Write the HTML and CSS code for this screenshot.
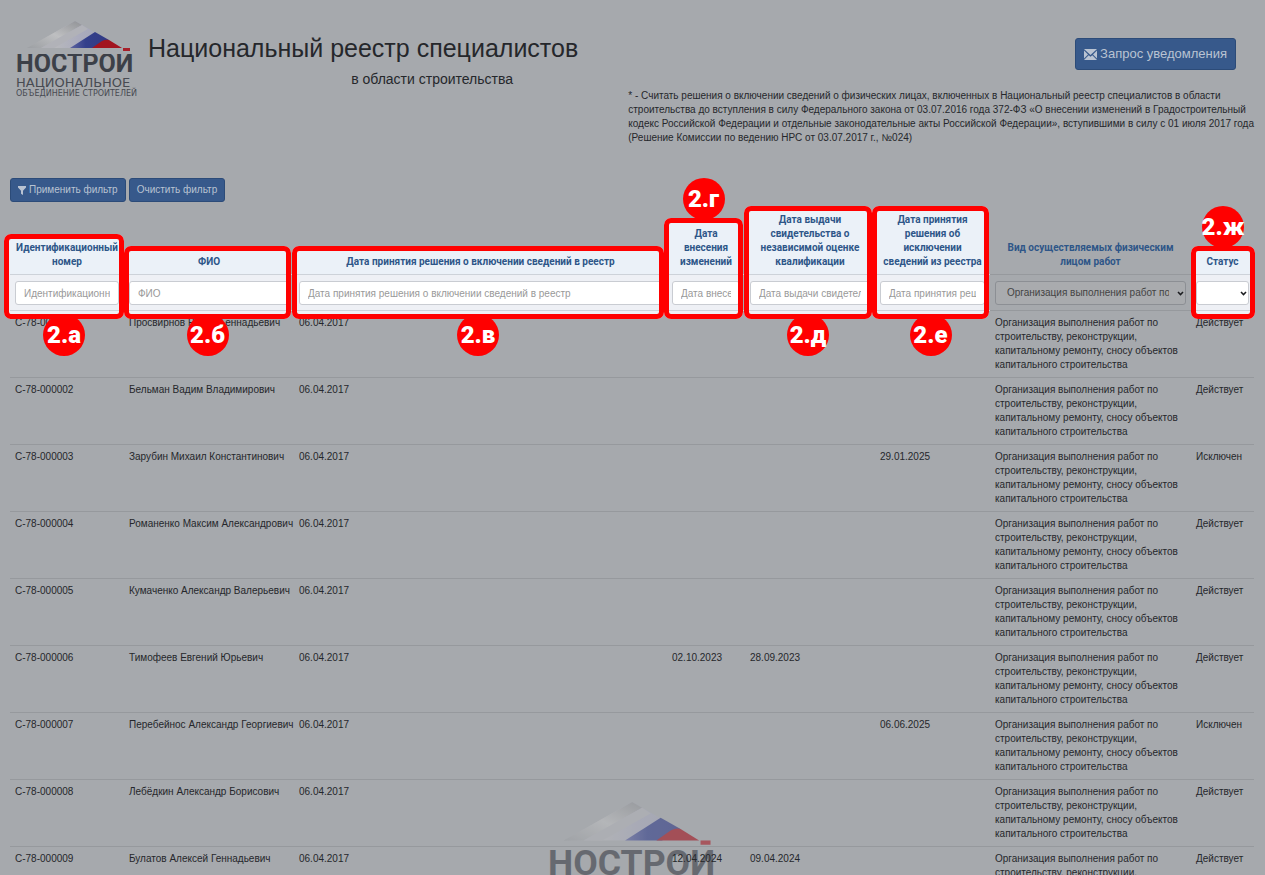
FILE: index.html
```html
<!DOCTYPE html>
<html lang="ru">
<head>
<meta charset="utf-8">
<title>Национальный реестр специалистов</title>
<link rel="stylesheet" href="styles.css">
</head>
<body>
<div class="page">
  <svg class="watermark" viewBox="0 0 122 80" role="img" aria-label="НОСТРОЙ">
    <use href="#logo-art"/>
    <text class="logo-name" x="0" y="51" clip-path="url(#caps)">НОСТРОЙ</text>
  </svg>

  <header class="header">
    <div class="brand">
      <svg class="logo" viewBox="0 0 122 80" role="img" aria-label="НОСТРОЙ Национальное объединение строителей">
        <defs>
          <clipPath id="caps"><rect x="0" y="33" width="122" height="20"/></clipPath>
          <linearGradient id="snow" x1="0" y1="0.6" x2="1" y2="0.6">
            <stop offset="0" stop-color="#a3a6aa"/>
            <stop offset="0.3" stop-color="#b7b8bc"/>
            <stop offset="0.55" stop-color="#aaabbd"/>
            <stop offset="1" stop-color="#a0a2b2"/>
          </linearGradient>
          <linearGradient id="ridge" x1="0" y1="1" x2="1" y2="0">
            <stop offset="0" stop-color="#9c9fa3"/>
            <stop offset="0.5" stop-color="#bebfc1"/>
            <stop offset="1" stop-color="#909296"/>
          </linearGradient>
          <linearGradient id="blue" x1="0" y1="0" x2="1" y2="0">
            <stop offset="0" stop-color="#5e64a0"/>
            <stop offset="0.4" stop-color="#333f8b"/>
            <stop offset="1" stop-color="#313a84"/>
          </linearGradient>
          <g id="logo-art">
            <path d="M59 0 L11 27 H106 Z" fill="url(#snow)"/>
            <path d="M59 0 L11 27 H25 L66 4 Z" fill="url(#ridge)"/>
            <path d="M66 4 L72 8 L38 27 H25 Z" fill="#b1b2b8"/>
            <path d="M79 11 L54 27 H80 L93 19 Z" fill="url(#blue)"/>
            <path d="M93 19 L106 27 H76 L86 20 Q90 18 93 19 Z" fill="#a2141f"/>
            <rect x="107" y="27" width="7" height="3" fill="#a8202a"/>
          </g>
        </defs>
        <text class="logo-name" x="0" y="51" clip-path="url(#caps)">НОСТРОЙ</text>
        <use href="#logo-art"/>
        <text class="logo-sub" x="0" y="66">НАЦИОНАЛЬНОЕ</text>
        <text class="logo-small" x="0" y="75">ОБЪЕДИНЕНИЕ СТРОИТЕЛЕЙ</text>
      </svg>
      <div class="titles">
        <h1 class="title">Национальный реестр специалистов</h1>
        <p class="subtitle">в области строительства</p>
      </div>
    </div>
    <div class="aside">
      <button class="btn btn-large" type="button">
        <svg class="icon-mail" viewBox="0 0 13 11" aria-hidden="true"><path d="M0 0H13L6.500 6Z M0 1.500L4 5.400L0 9.500Z M13 1.500L9 5.400L13 9.500Z M0 11L4.700 6.200L6.500 7.800L8.300 6.200L13 11Z" fill="currentColor"/></svg>
        <span>Запрос уведомления</span>
      </button>
      <p class="note">* - Считать решения о включении сведений о физических лицах, включенных в Национальный реестр специалистов в области<br>строительства до вступления в силу Федерального закона от 03.07.2016 года 372-ФЗ «О внесении изменений в Градостроительный<br>кодекс Российской Федерации и отдельные законодательные акты Российской Федерации», вступившими в силу с 01 июля 2017 года<br>(Решение Комиссии по ведению НРС от 03.07.2017 г., №024)</p>
    </div>
  </header>

  <div class="toolbar">
    <button class="btn" type="button">
      <svg class="icon-filter" viewBox="0 0 8 9" aria-hidden="true"><path d="M0 0H8V1.500L5 4.800V9L3 7.800V4.800L0 1.500Z" fill="currentColor"/></svg>
      <span>Применить фильтр</span>
    </button>
    <button class="btn" type="button">Очистить фильтр</button>
  </div>

  <table class="registry">
    <colgroup>
      <col class="c-id"><col class="c-name"><col><col class="c-change"><col class="c-cert"><col class="c-excl"><col class="c-kind"><col class="c-status">
    </colgroup>
    <thead>
      <tr class="heads">
        <th class="bright" scope="col">Идентификационный номер</th>
        <th class="bright" scope="col">ФИО</th>
        <th class="bright" scope="col">Дата принятия решения о включении сведений в реестр</th>
        <th class="bright" scope="col">Дата<br>внесения<br>изменений</th>
        <th class="bright" scope="col">Дата выдачи свидетельства о независимой оценке квалификации</th>
        <th class="bright" scope="col">Дата принятия<br>решения об<br>исключении<br>сведений из реестра</th>
        <th scope="col">Вид осуществляемых физическим лицом работ</th>
        <th class="bright" scope="col">Статус</th>
      </tr>
      <tr class="filters">
        <td class="lit lit-id"><input class="field" type="text" aria-label="Идентификационный номер" placeholder="Идентификационный номер"><span class="badge">2.а</span></td>
        <td class="lit lit-name"><input class="field" type="text" aria-label="ФИО" placeholder="ФИО"><span class="badge">2.б</span></td>
        <td class="lit lit-date"><input class="field" type="text" aria-label="Дата принятия решения о включении сведений в реестр" placeholder="Дата принятия решения о включении сведений в реестр"><span class="badge">2.в</span></td>
        <td class="lit lit-change"><input class="field" type="text" aria-label="Дата внесения изменений" placeholder="Дата внесения изменений"><span class="badge badge-top">2.г</span></td>
        <td class="lit lit-cert"><input class="field" type="text" aria-label="Дата выдачи свидетельства" placeholder="Дата выдачи свидетельства"><span class="badge">2.д</span></td>
        <td class="lit lit-excl"><input class="field" type="text" aria-label="Дата принятия решения об исключении" placeholder="Дата принятия решения об исключении"><span class="badge">2.е</span></td>
        <td><div class="select select-dim"><select class="field" aria-label="Вид работ"><option>Организация выполнения работ по строительству</option></select><svg class="chevron" viewBox="0 0 7 5" aria-hidden="true"><path d="M1 1L3.500 3.600L6 1"/></svg></div></td>
        <td class="lit lit-status"><div class="select"><select class="field" aria-label="Статус"><option></option></select><svg class="chevron" viewBox="0 0 7 5" aria-hidden="true"><path d="M1 1L3.500 3.600L6 1"/></svg></div><span class="badge badge-top">2.ж</span></td>
      </tr>
    </thead>
    <tbody>
      <tr><td>С-78-000001</td><td>Просвирнов Роман Геннадьевич</td><td>06.04.2017</td><td></td><td></td><td></td><td>Организация выполнения работ по строительству, реконструкции, капитальному ремонту, сносу объектов капитального строительства</td><td>Действует</td></tr>
      <tr><td>С-78-000002</td><td>Бельман Вадим Владимирович</td><td>06.04.2017</td><td></td><td></td><td></td><td>Организация выполнения работ по строительству, реконструкции, капитальному ремонту, сносу объектов капитального строительства</td><td>Действует</td></tr>
      <tr><td>С-78-000003</td><td>Зарубин Михаил Константинович</td><td>06.04.2017</td><td></td><td></td><td>29.01.2025</td><td>Организация выполнения работ по строительству, реконструкции, капитальному ремонту, сносу объектов капитального строительства</td><td>Исключен</td></tr>
      <tr><td>С-78-000004</td><td>Романенко Максим Александрович</td><td>06.04.2017</td><td></td><td></td><td></td><td>Организация выполнения работ по строительству, реконструкции, капитальному ремонту, сносу объектов капитального строительства</td><td>Действует</td></tr>
      <tr><td>С-78-000005</td><td>Кумаченко Александр Валерьевич</td><td>06.04.2017</td><td></td><td></td><td></td><td>Организация выполнения работ по строительству, реконструкции, капитальному ремонту, сносу объектов капитального строительства</td><td>Действует</td></tr>
      <tr><td>С-78-000006</td><td>Тимофеев Евгений Юрьевич</td><td>06.04.2017</td><td>02.10.2023</td><td>28.09.2023</td><td></td><td>Организация выполнения работ по строительству, реконструкции, капитальному ремонту, сносу объектов капитального строительства</td><td>Действует</td></tr>
      <tr><td>С-78-000007</td><td>Перебейнос Александр Георгиевич</td><td>06.04.2017</td><td></td><td></td><td>06.06.2025</td><td>Организация выполнения работ по строительству, реконструкции, капитальному ремонту, сносу объектов капитального строительства</td><td>Исключен</td></tr>
      <tr><td>С-78-000008</td><td>Лебёдкин Александр Борисович</td><td>06.04.2017</td><td></td><td></td><td></td><td>Организация выполнения работ по строительству, реконструкции, капитальному ремонту, сносу объектов капитального строительства</td><td>Действует</td></tr>
      <tr><td>С-78-000009</td><td>Булатов Алексей Геннадьевич</td><td>06.04.2017</td><td>12.04.2024</td><td>09.04.2024</td><td></td><td>Организация выполнения работ по строительству, реконструкции, капитальному ремонту, сносу объектов капитального строительства</td><td>Действует</td></tr>
    </tbody>
  </table>
</div>
</body>
</html>
```

FILE: styles.css
```css
* { box-sizing: border-box; }

body {
  margin: 0;
  background: #a6a9ad;
  color: #25272b;
  font: 10px/14px "Liberation Sans", Arial, sans-serif;
}

.page {
  position: relative;
  z-index: 0;
  height: 100vh;
  overflow: hidden;
  padding: 0 11px 0 10px;
}

/* Logo */
.logo { flex: none; width: 122px; height: 80px; }
.logo-name { font: bold 25px Roboto, sans-serif; fill: #3c4048; }
.logo-sub { font: 13px "DejaVu Sans", sans-serif; fill: #484b52; }
.logo-small { font: 8px "DejaVu Sans", sans-serif; fill: #484b52; }
.watermark {
  position: absolute;
  z-index: -2;
  left: 50%;
  bottom: -41px;
  width: 174px;
  height: 114px;
  margin-left: -85px;
  opacity: 0.6;
}

/* Header */
.header { display: flex; justify-content: space-between; height: 178px; }
.brand { display: flex; gap: 10px; padding: 21px 0 0 6px; }
.titles { padding-top: 12px; }
.title { margin: 0; font-size: 25px; line-height: 30px; font-weight: normal; white-space: nowrap; }
.subtitle { margin: 7px 0 0 138px; font-size: 14px; line-height: 18px; text-align: center; }
.aside { padding-top: 38px; }
.note { margin: 19px 0 0; white-space: nowrap; }

.btn {
  display: inline-flex;
  align-items: center;
  justify-content: center;
  gap: 3px;
  height: 24px;
  padding: 0 7px;
  border: 1px solid #2c4b78;
  border-radius: 3px;
  background: #37598b;
  color: #b9c3d2;
  font: 10px/14px "Liberation Sans", Arial, sans-serif;
  white-space: nowrap;
}
.btn-large {
  display: flex;
  height: 32px;
  margin: 0 18px 0 auto;
  padding: 0 8px;
  font-size: 13px;
}
.icon-mail { width: 13px; height: 11px; }
.icon-filter { width: 8px; height: 9px; }
.toolbar { display: flex; gap: 3px; }

/* Table */
.registry {
  width: 100%;
  margin-top: 5px;
  border-collapse: separate;
  border-spacing: 0;
  table-layout: fixed;
}
.c-id { width: 114px; }
.c-name { width: 170px; }
.c-change { width: 78px; }
.c-cert { width: 130px; }
.c-excl { width: 115px; }
.c-kind { width: 201px; }
.c-status { width: 63px; }

.registry th, .registry td { border-bottom: 1px solid #96999d; }
.registry .bright, .registry .lit { border-bottom-color: #cdd2d9; }
.registry th {
  padding: 6px 3px 5px;
  color: #2e5688;
  font-family: Roboto, sans-serif;
  vertical-align: bottom;
}
.registry tbody td { padding: 5px; vertical-align: top; }
.registry tbody td:nth-child(2) { white-space: nowrap; }
.registry .filters td { padding: 6px 5px 5px; }

.field {
  display: block;
  width: 100%;
  height: 24px;
  padding: 0 8px;
  border: 1px solid #c9ccd2;
  border-radius: 3px;
  background: #fff;
  color: #444;
  font: 10px/14px "Liberation Sans", Arial, sans-serif;
}
.field::placeholder { color: #999; opacity: 1; }
.select { position: relative; }
.select .field { appearance: none; padding: 0 16px 0 11px; }
.select-dim .field { background: #a9abae; border-color: #8c8f94; }
.chevron {
  position: absolute;
  right: 2px;
  top: 10px;
  width: 7px;
  height: 5px;
  fill: none;
  stroke: #1c1d20;
  stroke-width: 1.5;
}

/* Highlighted columns: light panel behind the cells, red frame above them */
.lit { position: relative; --rise: 37px; --left: 0px; --right: 3px; }
.lit::before, .lit::after {
  content: "";
  position: absolute;
  left: var(--left);
  right: var(--right);
  top: calc(-1 * var(--rise) + 8px);
  bottom: -9px;
  border-radius: 7px;
}
.lit::before {
  z-index: -1;
  background: linear-gradient(#ebf1f8 0, #ebf1f8 calc(var(--rise) - 8px), #eef0f5 calc(var(--rise) - 8px));
}
.lit::after { z-index: 1; border: 5px solid #f00; pointer-events: none; }
.lit-id { --rise: 49px; --left: -6px; --right: 0px; }
.lit-date { --left: -2px; }
.lit-change { --rise: 65px; --left: -3px; --right: 2px; }
.lit-cert { --rise: 77px; --left: -1px; }
.lit-excl { --rise: 77px; --left: -3px; --right: 1px; }
.lit-status { --right: -1px; }

.badge {
  position: absolute;
  z-index: 2;
  left: calc(50% + (var(--left) - var(--right)) / 2 - 21px);
  bottom: -46px;
  display: flex;
  justify-content: center;
  width: 42px;
  height: 42px;
  border-radius: 50%;
  background: #f00;
  color: #fff;
  font: 900 24px/42px Impact, Roboto, sans-serif;
}
.badge-top { bottom: auto; top: calc(-1 * var(--rise) - 32px); }
```
